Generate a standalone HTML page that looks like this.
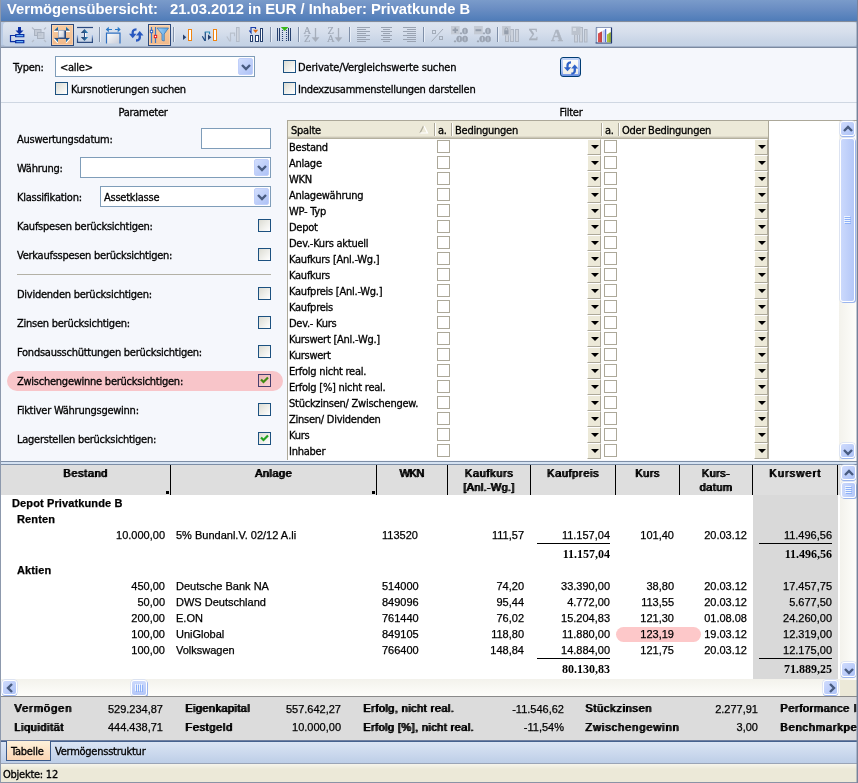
<!DOCTYPE html>
<html lang="de"><head><meta charset="utf-8"><title>Vermögensübersicht</title>
<style>
*{box-sizing:border-box;margin:0;padding:0}
html,body{width:858px;height:783px;overflow:hidden;background:#f5f7fc}
body{position:relative;will-change:transform;font-family:"DejaVu Sans Condensed","DejaVu Sans","Liberation Sans",sans-serif;font-size:11px;letter-spacing:-.25px;color:#000;line-height:13px}
.a{position:absolute;white-space:nowrap}
.ui{font-family:"DejaVu Sans Condensed","DejaVu Sans","Liberation Sans",sans-serif;font-size:11px;letter-spacing:-.25px;line-height:13px;margin-top:1px;-webkit-text-stroke:.3px #000}
.ar{font-family:"Liberation Sans",Arial,sans-serif;font-size:11px;line-height:13px;letter-spacing:0;-webkit-text-stroke:.25px #000}
.b{font-weight:bold;letter-spacing:.12px}
.se{font-family:"Liberation Serif",serif;font-size:12px;line-height:13px;letter-spacing:0;margin-top:1px}
.r{text-align:right}
.c{text-align:center}
#title{left:0;top:0;width:858px;height:21px;background:linear-gradient(#7a9bca,#6b8ec3 40%,#5882bc 80%,#4f7cb8)}
#title span{left:7px;top:1px;font-family:"Liberation Sans",Arial,sans-serif;font-size:14.75px;line-height:17px;font-weight:bold;color:#fff;white-space:pre;letter-spacing:0}
#tbb{left:1px;top:21px;width:856px;height:27px;background:linear-gradient(#858d9b 1px,#b9cbe5 1px,#b9cbe5 24px,#a3b2ca 25px,#a3b2ca 26px,#7b899f 26px)}
#tb{left:3px;top:22px;width:854px;height:24px;border-radius:4px 4px 3px 3px;background:linear-gradient(#d2dcec,#dde4ef 1.5px,#d7dfec 40%,#cad6e7 75%,#c4d2e5)}
.sep{width:1px;height:15px;top:27px;background:#7f8fa8;box-shadow:1px 0 0 #e8eef7}
.pressed{background:linear-gradient(#f6cca2,#f2b98a);border:1px solid #2c4a7c;box-shadow:inset 0 0 0 1px rgba(255,225,195,.5)}
.cb{width:13px;height:13px;border:1px solid #1c5180;background:linear-gradient(135deg,#dcdcd3,#fff)}
.cb2{width:13px;height:13px;border:1px solid #aca899;background:#fff}
.inp{border:1px solid #7f9db9;background:#fff}
.dd{width:15px;height:17px;border-radius:2px;background:linear-gradient(135deg,#d2defd,#aec2f6);border:1px solid #c0cffa}
.gh{top:121px;height:18px;background:#ece9d8;box-shadow:inset 0 -1px 0 #b4b09e,inset 0 -2px 0 #cbc7b8,inset 0 -3px 0 #e0dccb;padding-left:3px;line-height:19px;margin-top:0!important}
.gs{top:123px;width:2px;height:13px;background:#fff;border-left:1px solid #aca899}
.ddb{width:14px;height:16px;background:#ece9d8;border-left:1px solid #fff;border-top:1px solid #fff;border-right:1px solid #aca899;border-bottom:1px solid #aca899}
.ddb:after{content:"";position:absolute;left:3px;top:5px;border:4px solid transparent;border-top:4px solid #000;border-bottom:0}
.th{top:465px;height:30px;background:#dedede;border-right:1px solid #000;font-family:"Liberation Sans",Arial,sans-serif;font-size:11px;font-weight:normal;letter-spacing:0;text-shadow:1px 0 0 #000;-webkit-text-stroke:.25px #000;text-align:center;line-height:14px;padding-top:1px;padding-right:1px;white-space:normal}
.sum{font-family:"Liberation Sans",Arial,sans-serif;font-size:11px;font-weight:normal;text-shadow:1px 0 0 #000;-webkit-text-stroke:.25px #000}
.sb{background:linear-gradient(90deg,#f3f2ec,#fefefb)}
.sbh{background:linear-gradient(#f3f2ec,#fefefb)}
.sbtn{width:15px;height:15px;border-radius:3px;border:1px solid #fff;background:linear-gradient(135deg,#cfdbfd,#adc2f6);box-shadow:0 1px 0 #9bb5ee,0 0 0 .5px #c5d3f5}
.thumb{border-radius:3px;border:1px solid #fff;background:linear-gradient(90deg,#cbd9fc,#b4c7f8);box-shadow:1px 1px 0 #9bb5ee,0 0 0 .5px #c5d3f5}
</style></head>
<body>
<div id="title" class="a"><span class="a">Vermögensübersicht:   21.03.2012 in EUR / Inhaber: Privatkunde B</span></div>
<div class="a" style="left:0;top:0;width:1px;height:783px;background:#8d99ad"></div><div class="a" style="left:856px;top:21px;width:1px;height:762px;background:rgba(120,135,160,.45);z-index:9"></div><div class="a" style="left:857px;top:0;width:1px;height:783px;background:#76829a;z-index:9"></div>
<div id="tbb" class="a"></div><div id="tb" class="a"></div>
<div class="a pressed" style="left:51px;top:24px;width:23px;height:22px"></div>
<div class="a pressed" style="left:148px;top:24px;width:23px;height:22px"></div>
<div class="a sep" style="left:99px"></div>
<div class="a sep" style="left:173px"></div>
<div class="a sep" style="left:270px"></div>
<div class="a sep" style="left:298px"></div>
<div class="a sep" style="left:349px"></div>
<div class="a sep" style="left:423px"></div>
<div class="a sep" style="left:497px"></div>
<svg class="a" style="left:0;top:0" width="858" height="48" viewBox="0 0 858 48" shape-rendering="auto">
<defs>
<linearGradient id="gw" x1="0" y1="0" x2="1" y2="1"><stop offset="0" stop-color="#fff"/><stop offset="1" stop-color="#c8ccd8"/></linearGradient>
<linearGradient id="gf" x1="0" y1="0" x2="1" y2="0"><stop offset="0" stop-color="#a8d4f8"/><stop offset="1" stop-color="#5aa4e4"/></linearGradient>
<linearGradient id="gt" x1="0" y1="0" x2="0" y2="1"><stop offset="0" stop-color="#2090d0"/><stop offset="1" stop-color="#1c4a80"/></linearGradient><linearGradient id="gb" x1="0" y1="0" x2="0" y2="1"><stop offset="0" stop-color="#1c4a80"/><stop offset="1" stop-color="#2090d0"/></linearGradient>
<linearGradient id="gs" gradientUnits="userSpaceOnUse" x1="0" y1="35" x2="0" y2="42"><stop offset="0" stop-color="#b4ccf4"/><stop offset=".6" stop-color="#3a5a90"/><stop offset="1" stop-color="#2b4a80"/></linearGradient><linearGradient id="ga" gradientUnits="userSpaceOnUse" x1="81" y1="0" x2="88" y2="0"><stop offset="0" stop-color="#26406e"/><stop offset=".5" stop-color="#2b5f90"/><stop offset="1" stop-color="#2a8cc8"/></linearGradient>
</defs>
<!-- 1: tree with down arrow -->
<g fill="#0a2fa3"><rect x="18" y="27" width="3" height="4"/><path d="M15.5 30.5 H23.5 L19.5 34.5 Z"/>
<rect x="15" y="34" width="9.400" height="3.300" rx=".4"/><rect x="15" y="40" width="9.400" height="3.300" rx=".4"/></g>
<path d="M15.5 35.5 H10.5 V41.7 H15.5" fill="none" stroke="#0a2fa3" stroke-width="1.2"/>
<path d="M16.300 35.650 H23.200 M16.300 41.650 H23.200" stroke="#6ab4f8" stroke-width="1.100"/>
<!-- 2: disabled squares -->
<g fill="#c3cad6" stroke="#a9b2c0" stroke-width="1"><rect x="34.5" y="29.5" width="6.5" height="6"/><rect x="37.5" y="32.5" width="6.5" height="6" fill-opacity=".8"/></g>
<path d="M32 27.5 l2 2 M46 27.5 l-2 2 M32 42 l2 -2 M46 42 l-2 -2" stroke="#b4bcc9" stroke-width="1.2"/>
<!-- 3: expand (pressed) -->
<rect x="58.500" y="30.500" width="7.500" height="8.200" fill="#26457a"/><rect x="58.300" y="30.300" width="5.800" height="7.200" fill="url(#gw)" stroke="#93a3bf" stroke-width=".7"/>
<g fill="url(#gt)"><path d="M54 30.700 L58 26.700 V30.700 Z"/><path d="M70 30.700 L66 26.700 V30.700 Z"/></g>
<g fill="url(#gb)"><path d="M54 38 H58 V42.600 Z"/><path d="M70 38 H66 V42.600 Z"/></g>
<path d="M54 38.400 H70" stroke="#26457a" stroke-width=".9"/><path d="M54 31.400 H58 M66 31.400 H70" stroke="#fff" stroke-width="1.300"/><path d="M54 38.600 L57.800 43 M70 38.600 L66.200 43" stroke="#fff" stroke-width="1.100"/>
<!-- 4: vertical fit -->
<path d="M77 27.500 H93" stroke="#2b4a80" stroke-width="1.200"/><path d="M77.500 35 V42.300 H92.400 V35" fill="none" stroke="url(#gs)" stroke-width="1.200"/>
<path d="M85.500 32.500 V37.500" stroke="#fff" stroke-width="1"/><path d="M84.500 29 L88.200 32.900 H80.800 Z M84.500 41 L88.200 37.100 H80.800 Z" fill="url(#ga)"/><rect x="84" y="32.500" width="1" height="5" fill="#2b4a80"/>
<!-- 5: horizontal fit -->
<rect x="106.500" y="33" width="13.500" height="10.500" fill="url(#gw)"/><path d="M106.500 43.500 V33.200 H120 V43.500" fill="none" stroke="#2f6fc0" stroke-width="1.200"/>
<path d="M106.500 29.500 H112 M115 29.500 H120" fill="none" stroke="#2878c8" stroke-width="1.200"/><path d="M105.800 29.500 L108.800 26.800 V32.200 Z M120.700 29.500 L117.700 26.800 V32.200 Z" fill="#2878c8"/>
<!-- 6: refresh arrows -->
<g fill="#2858c0"><path d="M129 33.700 H136.500 L132.700 38.200 Z"/><path d="M136 35.500 H143.500 L139.700 31 Z"/></g>
<path d="M132.800 34.500 C132.200 31 133.200 29.300 136.500 29.300" fill="none" stroke="#2858c0" stroke-width="2.300"/><path d="M139.700 35 C140.300 38.500 139.300 40.500 136 40.500" fill="none" stroke="#2858c0" stroke-width="2.300"/>
<!-- 7: filter (pressed) -->
<path d="M151.500 27 V43 M155.500 27 V43" stroke="#3b78c8" stroke-width="1.200"/><rect x="150.300" y="30.300" width="2.400" height="2.400" fill="#fff" stroke="#2b5fc0" stroke-width=".9"/><rect x="154.300" y="35.300" width="2.400" height="2.400" fill="#fff" stroke="#e81010" stroke-width=".9"/>
<path d="M157 28 H168.500 L164.200 34 V41 L162 40.300 V34 Z" fill="url(#gf)" stroke="#3a78b8" stroke-width=".8" stroke-linejoin="round"/>
<!-- 8 -->
<path d="M183 34.500 L186.300 37.300 L183 40 Z" fill="#26406e"/><rect x="188.500" y="29.500" width="3" height="11" fill="#fff" stroke="#f08410" stroke-width="1"/>
<!-- 9 -->
<path d="M202.300 36.300 L204.700 40.300 L205.300 40.300 V32" fill="none" stroke="#1f4a80" stroke-width="1.200"/><path d="M204.700 32 H209.500 V34.200" fill="none" stroke="#2a88b4" stroke-width="1.200"/><path d="M208 34.500 L211.400 37.300 L208 40 Z" fill="#26406e"/><rect x="213.500" y="29.500" width="3" height="11" fill="#fff" stroke="#f08410" stroke-width="1"/>
<!-- 10 gray -->
<path d="M226.800 36.500 L229.600 41 L230.500 41 V33.200 H234.500 V36.200" fill="none" stroke="#b9c1cd" stroke-width="1.200"/><rect x="236.500" y="27.500" width="2.600" height="14" fill="#cfd5df" stroke="#b3bbc8" stroke-width="1"/>
<!-- 11 -->
<g fill="#fff" stroke="#26406e" stroke-width="1"><rect x="250.500" y="35.500" width="2" height="6"/><rect x="255.500" y="35.500" width="3" height="6"/><rect x="260.500" y="28.500" width="2" height="13"/></g>
<path d="M249.300 30.500 L251 32.800 V27.500 H255.500 V29" fill="none" stroke="#1c3fa8" stroke-width="1.200"/><path d="M253 29.800 H258.200 L255.600 33 Z" fill="#e06a10"/>
<!-- 12 -->
<path d="M277.500 28 V41 M279.500 28 V41 M288.500 28 V41 M290.500 28 V41" stroke="#26406e" stroke-width="1"/><path d="M282.500 30 V42 M286.500 30 V42" stroke="#26406e" stroke-width="1.100" stroke-dasharray="1 1"/><path d="M280.800 26.900 H288.500 L284.650 31 Z" fill="#38b818"/>
<!-- 13/14 sort -->
<g font-family="'Liberation Serif',serif" font-size="10.500" fill="#a0a9b7" stroke="#a0a9b7" stroke-width=".2"><text x="303.500" y="33.800">A</text><text x="304" y="42">Z</text><text x="327.500" y="33.800">Z</text><text x="327" y="42">A</text></g>
<g stroke="#a6aebb" stroke-width="1.300" fill="#a6aebb"><path d="M315.500 28 V39"/><path d="M312 37.500 H319 L315.500 41.800 Z" stroke-width=".4"/><path d="M338.500 28 V39"/><path d="M335 37.500 H342 L338.500 41.800 Z" stroke-width=".4"/></g>
<!-- 15-17 align -->
<g stroke="#9aa3b2" stroke-width="1"><path d="M357 27.5 H370 M357 29.5 H366 M357 31.5 H370 M357 33.5 H366 M357 35.5 H370 M357 37.5 H366 M357 39.5 H370 M357 41.5 H366"/>
<path d="M381 27.5 H392 M383 29.5 H390 M381 31.5 H392 M383 33.5 H390 M381 35.5 H392 M383 37.5 H390 M381 39.5 H392 M383 41.5 H390"/>
<path d="M403 27.5 H416 M407 29.5 H416 M403 31.5 H416 M407 33.5 H416 M403 35.5 H416 M407 37.5 H416 M403 39.5 H416 M407 41.5 H416"/></g>
<!-- percent -->
<path d="M431.5 41.5 L443 29" stroke="#a3acb9" stroke-width="1"/><rect x="432.5" y="30.5" width="3" height="3" fill="none" stroke="#a3acb9"/><rect x="439.5" y="36.5" width="3" height="3" fill="none" stroke="#a3acb9"/>
<!-- decimals -->
<rect x="451" y="26" width="8.600" height="8.300" fill="#c4cad4"/><path d="M452.600 30.200 H458 M455.300 27.500 V32.900" stroke="#959eac" stroke-width="1.700"/>
<rect x="474" y="26" width="8.800" height="8.300" fill="#c4cad4"/><path d="M475.500 30.200 H481.300" stroke="#959eac" stroke-width="2"/>
<g font-family="'Liberation Serif',serif" font-size="8" font-weight="bold" fill="#9aa3b1" stroke="#9aa3b1" stroke-width=".35"><text x="459.400" y="34.400" textLength="8.200" lengthAdjust="spacingAndGlyphs">.0</text><text x="453.600" y="41.600" textLength="14" lengthAdjust="spacingAndGlyphs">.00</text><text x="482.400" y="34.400" textLength="8.200" lengthAdjust="spacingAndGlyphs">.0</text><text x="476.600" y="41.600" textLength="14" lengthAdjust="spacingAndGlyphs">.00</text></g>
<!-- locked cols -->
<g fill="#ccd2dc" stroke="#aeb6c3" stroke-width="1"><rect x="505.500" y="34.500" width="3" height="7"/><rect x="510.500" y="29.500" width="3" height="12"/><rect x="515.500" y="29.500" width="3" height="12"/></g><rect x="502" y="26" width="8.700" height="9.500" fill="#c4cad4"/><rect x="504.200" y="30.300" width="4.300" height="4" fill="#959eac"/><path d="M505 30.500 V29.300 A1.350 1.350 0 0 1 507.700 29.300 V30.500" fill="none" stroke="#959eac" stroke-width=".9"/>
<!-- sigma, A -->
<text x="528.500" y="40.200" font-family="'Liberation Serif',serif" font-size="16.500" fill="#a8b0bc" stroke="#a8b0bc" stroke-width=".3">Σ</text>
<text x="551" y="40.500" font-family="'Liberation Serif',serif" font-size="16.500" font-weight="bold" fill="#adb5c1" stroke="#adb5c1" stroke-width=".4">A</text>
<!-- cols 2 -->
<g fill="#ccd2dc" stroke="#aeb6c3" stroke-width="1"><rect x="574.500" y="34.500" width="3" height="7.500"/><rect x="579.500" y="27.500" width="3" height="14.500"/><rect x="584.500" y="29.500" width="2.500" height="12.500"/></g><rect x="571.500" y="26.500" width="9" height="8.400" fill="#bcc3ce"/><rect x="573" y="28" width="3" height="3" fill="#d5dbe4"/>
<!-- chart -->
<rect x="596" y="27.500" width="15.500" height="15.500" fill="#fff"/><path d="M596.400 27.500 V43" stroke="#8fa1c2" stroke-width="1.600"/><path d="M595.600 43 H612 M611.500 27.500 V43" fill="none" stroke="#203870" stroke-width="1.200"/><path d="M596 27.500 H611.500" stroke="#4a6090" stroke-width=".6"/>
<path d="M598 33.500 L601.600 31.600 V42.300 H598 Z" fill="#d65050"/><path d="M600.800 32 L601.800 31.500 V42.300 H600.800 Z" fill="#b03030"/>
<path d="M602.500 31 L606 28.800 V42.300 H602.500 Z" fill="#c0c8f0"/><path d="M605.200 29.300 L606.200 28.700 V42.300 H605.200 Z" fill="#3858c8"/>
<path d="M607 34.500 L610.500 32.300 V42.300 H607 Z" fill="#a8c040"/><path d="M609.700 32.800 L610.700 32.200 V42.300 H609.700 Z" fill="#708820"/>
</svg>

<div class="a ui" style="left:13px;top:60px">Typen:</div>
<div class="a inp" style="left:55px;top:56px;width:200px;height:21px"></div>
<div class="a ui" style="left:60px;top:60px">&lt;alle&gt;</div>
<div class="a dd" style="left:238px;top:58px"></div><svg class="a" style="left:241px;top:63px" width="10" height="8" viewBox="0 0 10 8"><path d="M1 2 L5 6 L9 2" fill="none" stroke="#485b80" stroke-width="2.400"/></svg>
<div class="a cb" style="left:55px;top:82px"></div>
<div class="a ui" style="left:71px;top:82px">Kursnotierungen suchen</div>
<div class="a cb" style="left:283px;top:60px"></div>
<div class="a ui" style="left:298px;top:60px;letter-spacing:-.16px">Derivate/Vergleichswerte suchen</div>
<div class="a cb" style="left:283px;top:82px"></div>
<div class="a ui" style="left:298px;top:82px">Indexzusammenstellungen darstellen</div>
<div class="a" style="left:560px;top:57px;width:21px;height:20px;border:1px solid #003c74;border-radius:3px;background:linear-gradient(#c3d5f8,#a9c1f3 70%,#6a8fe0)"></div>
<div class="a" style="left:563px;top:60px;width:15px;height:14px;background:linear-gradient(#fdfdfb,#efeee6)"></div>
<svg class="a" style="left:560px;top:57px" width="21" height="20" viewBox="560 57 21 20"><g fill="#2f62c8"><path d="M563.900 67.200 H571.200 L567.500 71.300 Z"/><path d="M571.200 68.600 H578.200 L574.700 64.600 Z"/></g><path d="M567.600 68 C567 64.500 567.800 62.300 571 62.300" fill="none" stroke="#2f62c8" stroke-width="2.300"/><path d="M574.700 68 C575.200 71.500 574.500 73.700 571.300 73.700" fill="none" stroke="#2f62c8" stroke-width="2.300"/></svg>
<div class="a" style="left:1px;top:102px;width:857px;height:1px;background:#cfd7e2"></div>
<div class="a ui c" style="left:93px;top:105px;width:100px">Parameter</div>
<div class="a ui c" style="left:521px;top:105px;width:100px">Filter</div>
<div class="a ui" style="left:17px;top:132px">Auswertungsdatum:</div>
<div class="a inp" style="left:201px;top:128px;width:70px;height:21px"></div>
<div class="a ui" style="left:17px;top:161px">Währung:</div>
<div class="a inp" style="left:80px;top:157px;width:191px;height:21px"></div>
<div class="a dd" style="left:254px;top:159px"></div><svg class="a" style="left:257px;top:164px" width="10" height="8" viewBox="0 0 10 8"><path d="M1 2 L5 6 L9 2" fill="none" stroke="#485b80" stroke-width="2.400"/></svg>
<div class="a ui" style="left:17px;top:190px">Klassifikation:</div>
<div class="a inp" style="left:100px;top:186px;width:171px;height:21px"></div>
<div class="a ui" style="left:104px;top:190px">Assetklasse</div>
<div class="a dd" style="left:254px;top:188px"></div><svg class="a" style="left:257px;top:193px" width="10" height="8" viewBox="0 0 10 8"><path d="M1 2 L5 6 L9 2" fill="none" stroke="#485b80" stroke-width="2.400"/></svg>
<div class="a" style="left:17px;top:274px;width:254px;height:1px;background:#b3b1a6"></div>
<div class="a" style="left:7px;top:371px;width:276px;height:20px;border-radius:10px;background:#f8c5c9"></div>
<div class="a ui" style="left:17px;top:219px">Kaufspesen berücksichtigen:</div>
<div class="a cb" style="left:258px;top:219px"></div>
<div class="a ui" style="left:17px;top:248px">Verkaufsspesen berücksichtigen:</div>
<div class="a cb" style="left:258px;top:248px"></div>
<div class="a ui" style="left:17px;top:287px">Dividenden berücksichtigen:</div>
<div class="a cb" style="left:258px;top:287px"></div>
<div class="a ui" style="left:17px;top:316px">Zinsen berücksichtigen:</div>
<div class="a cb" style="left:258px;top:316px"></div>
<div class="a ui" style="left:17px;top:345px">Fondsausschüttungen berücksichtigen:</div>
<div class="a cb" style="left:258px;top:345px"></div>
<div class="a ui" style="left:17px;top:374px">Zwischengewinne berücksichtigen:</div>
<div class="a cb" style="left:258px;top:374px;border-color:#473f6e;background:linear-gradient(135deg,#eab5b6,#fdd3d3)"></div>
<svg class="a" style="left:260px;top:376px" width="9" height="9" viewBox="0 0 9 9"><path d="M1 3.500 L3.500 6 L8 1.500" fill="none" stroke="#3f8a12" stroke-width="2.200"/></svg>
<div class="a ui" style="left:17px;top:403px">Fiktiver Währungsgewinn:</div>
<div class="a cb" style="left:258px;top:403px"></div>
<div class="a ui" style="left:17px;top:432px">Lagerstellen berücksichtigen:</div>
<div class="a cb" style="left:258px;top:432px"></div>
<svg class="a" style="left:260px;top:434px" width="9" height="9" viewBox="0 0 9 9"><path d="M1 3.500 L3.500 6 L8 1.500" fill="none" stroke="#21a121" stroke-width="2.200"/></svg>
<div class="a" style="left:287px;top:120px;width:570px;height:340px;background:#fff;border-top:1px solid #aca899;border-left:1px solid #aca899"></div>
<div class="a gh ui" style="left:288px;width:147px">Spalte</div>
<svg class="a" style="left:419px;top:125px" width="10" height="9" viewBox="0 0 10 9"><path d="M4.500 1 L1 8" fill="none" stroke="#aca899" stroke-width="1.200"/><path d="M5 1 L8.500 8 H1" fill="none" stroke="#fff" stroke-width="1.200"/></svg>
<div class="a gh ui" style="left:435px;width:17px">a.</div>
<div class="a gh ui" style="left:452px;width:150px">Bedingungen</div>
<div class="a gh ui" style="left:602px;width:17px">a.</div>
<div class="a gh ui" style="left:619px;width:150px">Oder Bedingungen</div>
<div class="a gs" style="left:434px"></div>
<div class="a gs" style="left:451px"></div>
<div class="a gs" style="left:601px"></div>
<div class="a gs" style="left:618px"></div>
<div class="a" style="left:768px;top:121px;width:1px;height:18px;background:#aca899"></div>
<div class="a ui" style="left:289px;top:140px">Bestand</div>
<div class="a cb2" style="left:437px;top:140px"></div>
<div class="a ddb" style="left:587px;top:139px"></div>
<div class="a cb2" style="left:604px;top:140px"></div>
<div class="a ddb" style="left:754px;top:139px"></div>
<div class="a ui" style="left:289px;top:156px">Anlage</div>
<div class="a cb2" style="left:437px;top:156px"></div>
<div class="a ddb" style="left:587px;top:155px"></div>
<div class="a cb2" style="left:604px;top:156px"></div>
<div class="a ddb" style="left:754px;top:155px"></div>
<div class="a ui" style="left:289px;top:172px">WKN</div>
<div class="a cb2" style="left:437px;top:172px"></div>
<div class="a ddb" style="left:587px;top:171px"></div>
<div class="a cb2" style="left:604px;top:172px"></div>
<div class="a ddb" style="left:754px;top:171px"></div>
<div class="a ui" style="left:289px;top:188px">Anlagewährung</div>
<div class="a cb2" style="left:437px;top:188px"></div>
<div class="a ddb" style="left:587px;top:187px"></div>
<div class="a cb2" style="left:604px;top:188px"></div>
<div class="a ddb" style="left:754px;top:187px"></div>
<div class="a ui" style="left:289px;top:204px">WP- Typ</div>
<div class="a cb2" style="left:437px;top:204px"></div>
<div class="a ddb" style="left:587px;top:203px"></div>
<div class="a cb2" style="left:604px;top:204px"></div>
<div class="a ddb" style="left:754px;top:203px"></div>
<div class="a ui" style="left:289px;top:220px">Depot</div>
<div class="a cb2" style="left:437px;top:220px"></div>
<div class="a ddb" style="left:587px;top:219px"></div>
<div class="a cb2" style="left:604px;top:220px"></div>
<div class="a ddb" style="left:754px;top:219px"></div>
<div class="a ui" style="left:289px;top:236px">Dev.-Kurs aktuell</div>
<div class="a cb2" style="left:437px;top:236px"></div>
<div class="a ddb" style="left:587px;top:235px"></div>
<div class="a cb2" style="left:604px;top:236px"></div>
<div class="a ddb" style="left:754px;top:235px"></div>
<div class="a ui" style="left:289px;top:252px">Kaufkurs [Anl.-Wg.]</div>
<div class="a cb2" style="left:437px;top:252px"></div>
<div class="a ddb" style="left:587px;top:251px"></div>
<div class="a cb2" style="left:604px;top:252px"></div>
<div class="a ddb" style="left:754px;top:251px"></div>
<div class="a ui" style="left:289px;top:268px">Kaufkurs</div>
<div class="a cb2" style="left:437px;top:268px"></div>
<div class="a ddb" style="left:587px;top:267px"></div>
<div class="a cb2" style="left:604px;top:268px"></div>
<div class="a ddb" style="left:754px;top:267px"></div>
<div class="a ui" style="left:289px;top:284px">Kaufpreis [Anl.-Wg.]</div>
<div class="a cb2" style="left:437px;top:284px"></div>
<div class="a ddb" style="left:587px;top:283px"></div>
<div class="a cb2" style="left:604px;top:284px"></div>
<div class="a ddb" style="left:754px;top:283px"></div>
<div class="a ui" style="left:289px;top:300px">Kaufpreis</div>
<div class="a cb2" style="left:437px;top:300px"></div>
<div class="a ddb" style="left:587px;top:299px"></div>
<div class="a cb2" style="left:604px;top:300px"></div>
<div class="a ddb" style="left:754px;top:299px"></div>
<div class="a ui" style="left:289px;top:316px">Dev.- Kurs</div>
<div class="a cb2" style="left:437px;top:316px"></div>
<div class="a ddb" style="left:587px;top:315px"></div>
<div class="a cb2" style="left:604px;top:316px"></div>
<div class="a ddb" style="left:754px;top:315px"></div>
<div class="a ui" style="left:289px;top:332px">Kurswert [Anl.-Wg.]</div>
<div class="a cb2" style="left:437px;top:332px"></div>
<div class="a ddb" style="left:587px;top:331px"></div>
<div class="a cb2" style="left:604px;top:332px"></div>
<div class="a ddb" style="left:754px;top:331px"></div>
<div class="a ui" style="left:289px;top:348px">Kurswert</div>
<div class="a cb2" style="left:437px;top:348px"></div>
<div class="a ddb" style="left:587px;top:347px"></div>
<div class="a cb2" style="left:604px;top:348px"></div>
<div class="a ddb" style="left:754px;top:347px"></div>
<div class="a ui" style="left:289px;top:364px">Erfolg nicht real.</div>
<div class="a cb2" style="left:437px;top:364px"></div>
<div class="a ddb" style="left:587px;top:363px"></div>
<div class="a cb2" style="left:604px;top:364px"></div>
<div class="a ddb" style="left:754px;top:363px"></div>
<div class="a ui" style="left:289px;top:380px">Erfolg [%] nicht real.</div>
<div class="a cb2" style="left:437px;top:380px"></div>
<div class="a ddb" style="left:587px;top:379px"></div>
<div class="a cb2" style="left:604px;top:380px"></div>
<div class="a ddb" style="left:754px;top:379px"></div>
<div class="a ui" style="left:289px;top:396px">Stückzinsen/ Zwischengew.</div>
<div class="a cb2" style="left:437px;top:396px"></div>
<div class="a ddb" style="left:587px;top:395px"></div>
<div class="a cb2" style="left:604px;top:396px"></div>
<div class="a ddb" style="left:754px;top:395px"></div>
<div class="a ui" style="left:289px;top:412px">Zinsen/ Dividenden</div>
<div class="a cb2" style="left:437px;top:412px"></div>
<div class="a ddb" style="left:587px;top:411px"></div>
<div class="a cb2" style="left:604px;top:412px"></div>
<div class="a ddb" style="left:754px;top:411px"></div>
<div class="a ui" style="left:289px;top:428px">Kurs</div>
<div class="a cb2" style="left:437px;top:428px"></div>
<div class="a ddb" style="left:587px;top:427px"></div>
<div class="a cb2" style="left:604px;top:428px"></div>
<div class="a ddb" style="left:754px;top:427px"></div>
<div class="a ui" style="left:289px;top:444px">Inhaber</div>
<div class="a cb2" style="left:437px;top:444px"></div>
<div class="a ddb" style="left:587px;top:443px"></div>
<div class="a cb2" style="left:604px;top:444px"></div>
<div class="a ddb" style="left:754px;top:443px"></div>
<div class="a" style="left:768px;top:139px;width:1px;height:320px;background:#aca899"></div>
<div class="a sb" style="left:839px;top:121px;width:18px;height:340px"></div>
<div class="a sbtn" style="left:840px;top:121px"></div><svg class="a" style="left:843px;top:125px" width="10" height="8" viewBox="0 0 10 8"><path d="M1 6 L5 2 L9 6" fill="none" stroke="#485b80" stroke-width="2.400"/></svg>
<div class="a thumb" style="left:840px;top:138px;width:15px;height:164px"></div>
<svg class="a" style="left:844px;top:216px" width="8" height="8" viewBox="0 0 8 8"><path d="M0 .5H6M0 2.500H6M0 4.500H6M0 6.500H6" stroke="#eef4fe"/><path d="M1 1.500H7M1 3.500H7M1 5.500H7M1 7.500H7" stroke="#8cb0f8"/></svg>
<div class="a sbtn" style="left:840px;top:443px"></div><svg class="a" style="left:843px;top:448px" width="10" height="8" viewBox="0 0 10 8"><path d="M1 2 L5 6 L9 2" fill="none" stroke="#485b80" stroke-width="2.400"/></svg>
<div class="a" style="left:1px;top:461px;width:857px;height:4px;background:#d5e2f2;border-top:1px solid #7d8ea6;border-bottom:1px solid #7d8ea6"></div>
<div class="a" style="left:1px;top:465px;width:839px;height:215px;background:#fff"></div>
<div class="a" style="left:1px;top:465px;width:839px;height:30px;background:#dedede"></div>
<div class="a th" style="left:1px;width:170px"><span style="letter-spacing:0.6px;margin-right:-0.6px">Bestand</span></div>
<div class="a th" style="left:171px;width:206px"><span style="letter-spacing:0.46px;margin-right:-0.46px">Anlage</span></div>
<div class="a th" style="left:377px;width:71px"><span style="letter-spacing:-0.5px;margin-right:0.5px">WKN</span></div>
<div class="a th" style="left:448px;width:83px"><span style="letter-spacing:0.66px;margin-right:-0.66px">Kaufkurs</span><br><span style="letter-spacing:0.3px;margin-right:-0.3px">[Anl.-Wg.]</span></div>
<div class="a th" style="left:531px;width:85px"><span style="letter-spacing:0.62px;margin-right:-0.62px">Kaufpreis</span></div>
<div class="a th" style="left:616px;width:64px"><span style="letter-spacing:0.53px;margin-right:-0.53px">Kurs</span></div>
<div class="a th" style="left:680px;width:73px"><span style="letter-spacing:0.37px;margin-right:-0.37px">Kurs-</span><br><span style="letter-spacing:0.47px;margin-right:-0.47px">datum</span></div>
<div class="a th" style="left:753px;width:85px"><span style="letter-spacing:1.08px;margin-right:-1.08px">Kurswert</span></div>
<div class="a" style="left:166px;top:491px;width:3px;height:3px;background:#000"></div>
<div class="a" style="left:372px;top:491px;width:3px;height:3px;background:#000"></div>
<div class="a" style="left:753px;top:495px;width:85px;height:184px;background:#d9d9d9"></div>
<div class="a ar b" style="left:12px;top:497px">Depot Privatkunde B</div>
<div class="a ar b" style="left:17px;top:513px">Renten</div>
<div class="a ar b" style="left:17px;top:564px">Aktien</div>
<div class="a" style="left:616px;top:627px;width:85px;height:15px;border-radius:7.5px;background:#fdc8c9"></div>
<div class="a ar r" style="left:45px;width:120px;top:529px">10.000,00</div>
<div class="a ar" style="left:176px;top:529px">5% Bundanl.V. 02/12 A.li</div>
<div class="a ar" style="left:382px;top:529px">113520</div>
<div class="a ar r" style="left:404px;width:120px;top:529px">111,57</div>
<div class="a ar r" style="left:490px;width:120px;top:529px">11.157,04</div>
<div class="a ar r" style="left:554px;width:120px;top:529px">101,40</div>
<div class="a ar r" style="left:627px;width:120px;top:529px">20.03.12</div>
<div class="a ar r" style="left:712px;width:120px;top:529px">11.496,56</div>
<div class="a ar r" style="left:45px;width:120px;top:580px">450,00</div>
<div class="a ar" style="left:176px;top:580px">Deutsche Bank NA</div>
<div class="a ar" style="left:382px;top:580px">514000</div>
<div class="a ar r" style="left:404px;width:120px;top:580px">74,20</div>
<div class="a ar r" style="left:490px;width:120px;top:580px">33.390,00</div>
<div class="a ar r" style="left:554px;width:120px;top:580px">38,80</div>
<div class="a ar r" style="left:627px;width:120px;top:580px">20.03.12</div>
<div class="a ar r" style="left:712px;width:120px;top:580px">17.457,75</div>
<div class="a ar r" style="left:45px;width:120px;top:596px">50,00</div>
<div class="a ar" style="left:176px;top:596px">DWS Deutschland</div>
<div class="a ar" style="left:382px;top:596px">849096</div>
<div class="a ar r" style="left:404px;width:120px;top:596px">95,44</div>
<div class="a ar r" style="left:490px;width:120px;top:596px">4.772,00</div>
<div class="a ar r" style="left:554px;width:120px;top:596px">113,55</div>
<div class="a ar r" style="left:627px;width:120px;top:596px">20.03.12</div>
<div class="a ar r" style="left:712px;width:120px;top:596px">5.677,50</div>
<div class="a ar r" style="left:45px;width:120px;top:612px">200,00</div>
<div class="a ar" style="left:176px;top:612px">E.ON</div>
<div class="a ar" style="left:382px;top:612px">761440</div>
<div class="a ar r" style="left:404px;width:120px;top:612px">76,02</div>
<div class="a ar r" style="left:490px;width:120px;top:612px">15.204,83</div>
<div class="a ar r" style="left:554px;width:120px;top:612px">121,30</div>
<div class="a ar r" style="left:627px;width:120px;top:612px">01.08.08</div>
<div class="a ar r" style="left:712px;width:120px;top:612px">24.260,00</div>
<div class="a ar r" style="left:45px;width:120px;top:628px">100,00</div>
<div class="a ar" style="left:176px;top:628px">UniGlobal</div>
<div class="a ar" style="left:382px;top:628px">849105</div>
<div class="a ar r" style="left:404px;width:120px;top:628px">118,80</div>
<div class="a ar r" style="left:490px;width:120px;top:628px">11.880,00</div>
<div class="a ar r" style="left:554px;width:120px;top:628px">123,19</div>
<div class="a ar r" style="left:627px;width:120px;top:628px">19.03.12</div>
<div class="a ar r" style="left:712px;width:120px;top:628px">12.319,00</div>
<div class="a ar r" style="left:45px;width:120px;top:644px">100,00</div>
<div class="a ar" style="left:176px;top:644px">Volkswagen</div>
<div class="a ar" style="left:382px;top:644px">766400</div>
<div class="a ar r" style="left:404px;width:120px;top:644px">148,84</div>
<div class="a ar r" style="left:490px;width:120px;top:644px">14.884,00</div>
<div class="a ar r" style="left:554px;width:120px;top:644px">121,75</div>
<div class="a ar r" style="left:627px;width:120px;top:644px">20.03.12</div>
<div class="a ar r" style="left:712px;width:120px;top:644px">12.175,00</div>
<div class="a" style="left:537px;top:543px;width:73px;height:1px;background:#000"></div>
<div class="a" style="left:759px;top:543px;width:73px;height:1px;background:#000"></div>
<div class="a" style="left:537px;top:658px;width:73px;height:1px;background:#000"></div>
<div class="a" style="left:759px;top:658px;width:73px;height:1px;background:#000"></div>
<div class="a se b r" style="left:490px;width:120px;top:547px">11.157,04</div>
<div class="a se b r" style="left:712px;width:120px;top:547px">11.496,56</div>
<div class="a se b r" style="left:490px;width:120px;top:662px">80.130,83</div>
<div class="a se b r" style="left:712px;width:120px;top:662px">71.889,25</div>
<div class="a sb" style="left:840px;top:465px;width:17px;height:215px"></div>
<div class="a sbtn" style="left:841px;top:465px"></div><svg class="a" style="left:844px;top:469px" width="10" height="8" viewBox="0 0 10 8"><path d="M1 6 L5 2 L9 6" fill="none" stroke="#485b80" stroke-width="2.400"/></svg>
<div class="a thumb" style="left:841px;top:482px;width:15px;height:16px"></div>
<svg class="a" style="left:845px;top:486px" width="8" height="8" viewBox="0 0 8 8"><path d="M0 .5H6M0 2.500H6M0 4.500H6M0 6.500H6" stroke="#eef4fe"/><path d="M1 1.500H7M1 3.500H7M1 5.500H7M1 7.500H7" stroke="#8cb0f8"/></svg>
<div class="a sbtn" style="left:841px;top:662px"></div><svg class="a" style="left:844px;top:667px" width="10" height="8" viewBox="0 0 10 8"><path d="M1 2 L5 6 L9 2" fill="none" stroke="#485b80" stroke-width="2.400"/></svg>
<div class="a sbh" style="left:1px;top:679px;width:839px;height:17px"></div>
<div class="a" style="left:840px;top:680px;width:18px;height:16px;background:#ece9d8"></div>
<div class="a sbtn" style="left:2px;top:680px"></div><svg class="a" style="left:6px;top:683px" width="8" height="10" viewBox="0 0 8 10"><path d="M6 1 L2 5 L6 9" fill="none" stroke="#485b80" stroke-width="2.400"/></svg>
<div class="a thumb" style="left:131px;top:680px;width:16px;height:16px;background:linear-gradient(#cbd9fc,#b4c7f8)"></div>
<svg class="a" style="left:135px;top:684px" width="8" height="8" viewBox="0 0 8 8"><path d="M.5 0V7M2.5 0V7M4.500 0V7M6.500 0V7" stroke="#eef4fe"/><path d="M1.500 1V8M3.500 1V8M5.500 1V8M7.500 1V8" stroke="#8cb0f8"/></svg>
<div class="a sbtn" style="left:823px;top:680px"></div><svg class="a" style="left:828px;top:683px" width="8" height="10" viewBox="0 0 8 10"><path d="M2 1 L6 5 L2 9" fill="none" stroke="#485b80" stroke-width="2.400"/></svg>
<div class="a" style="left:1px;top:696px;width:857px;height:45px;background:#dcdcdc;border-top:1px solid #8a8a8a;border-bottom:1px solid #6f7f9f"></div>
<div class="a sum" style="left:14px;top:702px;letter-spacing:0.98px">Vermögen</div>
<div class="a sum" style="left:14px;top:721px;letter-spacing:0.55px">Liquidität</div>
<div class="a sum" style="left:185px;top:702px;letter-spacing:0.4px">Eigenkapital</div>
<div class="a sum" style="left:185px;top:721px;letter-spacing:0.66px">Festgeld</div>
<div class="a sum" style="left:363px;top:702px;letter-spacing:0.44px">Erfolg, nicht real.</div>
<div class="a sum" style="left:363px;top:721px;letter-spacing:0.4px">Erfolg [%], nicht real.</div>
<div class="a sum" style="left:585px;top:702px;letter-spacing:0.69px">Stückzinsen</div>
<div class="a sum" style="left:585px;top:721px;letter-spacing:0.93px">Zwischengewinn</div>
<div class="a sum" style="left:780px;top:702px;letter-spacing:0.6px">Performance I</div>
<div class="a sum" style="left:780px;top:721px;letter-spacing:0.85px">Benchmarkpe</div>
<div class="a ar r" style="left:63px;width:100px;top:703px">529.234,87</div>
<div class="a ar r" style="left:63px;width:100px;top:721px">444.438,71</div>
<div class="a ar r" style="left:241px;width:100px;top:703px">557.642,27</div>
<div class="a ar r" style="left:241px;width:100px;top:721px">10.000,00</div>
<div class="a ar r" style="left:464px;width:100px;top:703px">-11.546,62</div>
<div class="a ar r" style="left:464px;width:100px;top:721px">-11,54%</div>
<div class="a ar r" style="left:658px;width:100px;top:703px">2.277,91</div>
<div class="a ar r" style="left:658px;width:100px;top:721px">3,00</div>
<div class="a" style="left:1px;top:741px;width:856px;height:22px;background:linear-gradient(#dbe5f4,#bdcee7);border-top:1px solid #46628f"></div>
<div class="a" style="left:1px;top:763px;width:856px;height:1px;background:#9aa4b6"></div>
<div class="a" style="left:6px;top:741px;width:45px;height:20px;background:linear-gradient(#fdf1da,#fbd6b4);border:1px solid #3b5a8a;border-top:0"></div>
<div class="a ui" style="left:11px;top:744px">Tabelle</div>
<div class="a ui" style="left:55px;top:744px">Vermögensstruktur</div>
<div class="a" style="left:1px;top:764px;width:856px;height:19px;background:linear-gradient(#f6f5ec,#ece9d8 5px);border-bottom:1px solid #8a93a5"></div>
<div class="a ui" style="left:3px;top:767px">Objekte: 12</div>
</body></html>
